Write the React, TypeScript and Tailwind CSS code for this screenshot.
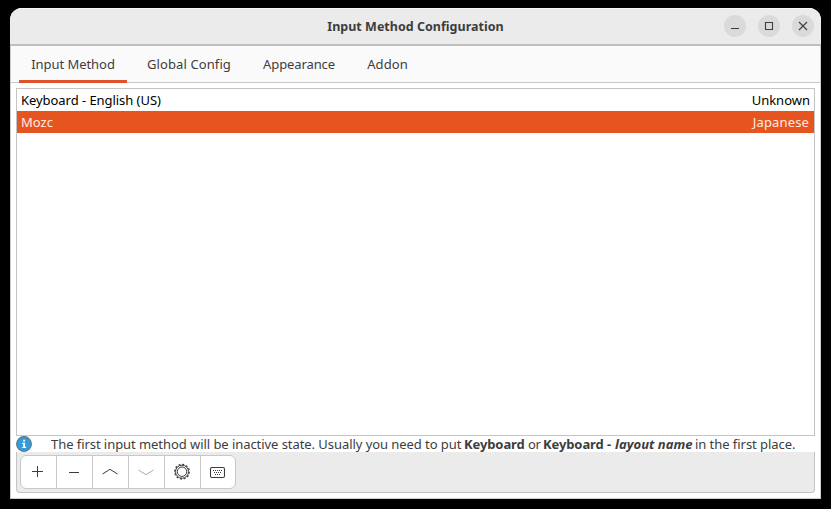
import type { ReactNode } from 'react';

const tabs = [
  { label: 'Input Method', width: 'w-[108px]', tracking: 'tracking-[-0.05px]', active: true },
  { label: 'Global Config', width: 'w-[108px]', tracking: 'tracking-[0.1px]', active: false },
  { label: 'Appearance', width: 'w-24', tracking: 'tracking-[-0.1px]', active: false },
  { label: 'Addon', width: 'w-[65px]', tracking: 'tracking-[0.1px]', active: false },
];

function WindowButton({ label, children }: { label: string; children: ReactNode }) {
  return (
    <button aria-label={label} className="flex size-[22px] items-center justify-center rounded-full bg-[#dadada]">
      <svg width="22" height="22" viewBox="0 0 22 22" fill="none" stroke="#3d3d3d" strokeWidth="1.1">
        {children}
      </svg>
    </button>
  );
}

function ToolButton({ label, children, last }: { label: string; children: ReactNode; last?: boolean }) {
  return (
    <button
      aria-label={label}
      className={`flex h-full items-center justify-center border-[#c8c8c8] ${last ? 'w-[34px]' : 'w-9 border-r pr-px'}`}
    >
      <svg width="20" height="20" viewBox="0 0 20 20" fill="none" stroke="#3d3d3d" strokeWidth="1">
        {children}
      </svg>
    </button>
  );
}

export default function App() {
  return (
    <div className="h-[509px] w-[831px] overflow-hidden bg-black pt-2 pl-2.5 font-['Noto_Sans',sans-serif] text-[13px] text-[#3d3d3d]">
      <div className="flex h-[491px] w-[811px] flex-col overflow-hidden rounded-t-xl bg-white">
        <header className="grid h-[38px] shrink-0 grid-cols-[1fr_auto_1fr] items-center border-t border-b-2 border-t-[#f7f7f7] border-b-[#bfbfbf] bg-[#ebebeb] pr-[7px]">
          <span />
          <h1 className="ml-[7px] pt-px text-[12.5px] font-bold tracking-[0.02px] whitespace-nowrap">Input Method Configuration</h1>
          <div className="flex justify-end gap-3 pb-[2px]">
            <WindowButton label="Minimize">
              <path d="M7 13.5h8" />
            </WindowButton>
            <WindowButton label="Maximize">
              <path d="M7.5 7.5h7v7h-7z" />
            </WindowButton>
            <WindowButton label="Close">
              <path d="M7 7l8 8M15 7l-8 8" />
            </WindowButton>
          </div>
        </header>
        <div className="flex min-h-0 flex-1 flex-col border-x border-b border-[#cccccc]">
          <nav className="flex h-[37px] shrink-0 gap-2 border-b border-[#c8c8cc] bg-[#fafafb] pl-2">
            {tabs.map((tab) => (
              <button
                key={tab.label}
                className={`-mb-px flex items-center justify-center border-b-[3px] pt-[3px] whitespace-nowrap ${tab.width} ${tab.tracking} ${tab.active ? 'border-[#e0532a]' : 'border-transparent'}`}
              >
                {tab.label}
              </button>
            ))}
          </nav>
          <main className="flex min-h-0 flex-1 flex-col px-[5px] pt-[5px] pb-[5px]">
            <div className="h-[348px] shrink-0 border border-[#c4c4c4] bg-white text-black">
              <div className="flex h-[22px] items-center justify-between px-1 pt-[2px]">
                <span className="tracking-[-0.05px]">Keyboard - English (US)</span>
                <span>Unknown</span>
              </div>
              <div className="flex h-[22px] items-center justify-between bg-[#e6551f] px-1 pt-[2px] text-[#fdebe3]">
                <span>Mozc</span>
                <span className="pr-px tracking-[0.15px]">Japanese</span>
              </div>
            </div>
            <div className="flex h-4 shrink-0 items-center whitespace-pre">
              <svg className="mr-[19px] shrink-0" width="16" height="16" viewBox="0 0 16 16">
                <circle cx="8" cy="8" r="7.4" fill="#359bd9" stroke="#56798f" strokeWidth="1.1" />
                <path d="M7.2 3.7h1.9v1.8H7.2zM6.2 6.8h2.9v4.1h1v1.1H6.2v-1.1h1v-3h-1z" fill="#fff" />
              </svg>
              <p className="flex items-center pt-[2px]">
                <span className="w-[413px] tracking-[-0.06px]">The first input method will be inactive state. Usually you need to put </span>
                <b className="w-16 tracking-[-0.1px]">Keyboard</b>
                <span className="w-[15px] tracking-[-0.3px]">or</span>
                <b className="w-[72px] tracking-[-0.1px]">Keyboard -</b>
                <b className="w-20 tracking-[0.05px] italic">layout name</b>
                <span className="tracking-[-0.05px]">in the first place.</span>
              </p>
            </div>
            <div className="flex-1 rounded-b border-x border-b border-[#c4c4c4] bg-[#ebebec] pt-[3px] pl-[3px]">
              <div className="flex h-[34px] w-[216px] overflow-hidden rounded-md border border-[#c8c8c8] bg-white">
                <ToolButton label="Add input method">
                  <path d="M4 9.5h11M9.5 4v11" />
                </ToolButton>
                <ToolButton label="Remove input method">
                  <path d="M5 10.5h10" />
                </ToolButton>
                <ToolButton label="Move up">
                  <path d="M2.5 12L10 7.3l7.5 4.7" />
                </ToolButton>
                <ToolButton label="Move down">
                  <path d="M2.5 8l7.5 4.7L17.5 8" stroke="#aaaaaa" />
                </ToolButton>
                <ToolButton label="Configure">
                  <circle cx="10" cy="9.7" r="6.5" />
                  <circle cx="10" cy="9.7" r="4.7" />
                  <circle cx="10" cy="9.7" r="7.3" strokeWidth="1.3" strokeDasharray="2 1.822" />
                </ToolButton>
                <ToolButton label="Keyboard layout" last>
                  <rect x="2.5" y="5.5" width="14" height="10" rx="1.5" strokeWidth="1.1" />
                  <path d="M5 8.5h10M6 10.5h8M7 12.5h6" strokeDasharray="1 1" />
                </ToolButton>
              </div>
            </div>
          </main>
        </div>
      </div>
    </div>
  );
}
